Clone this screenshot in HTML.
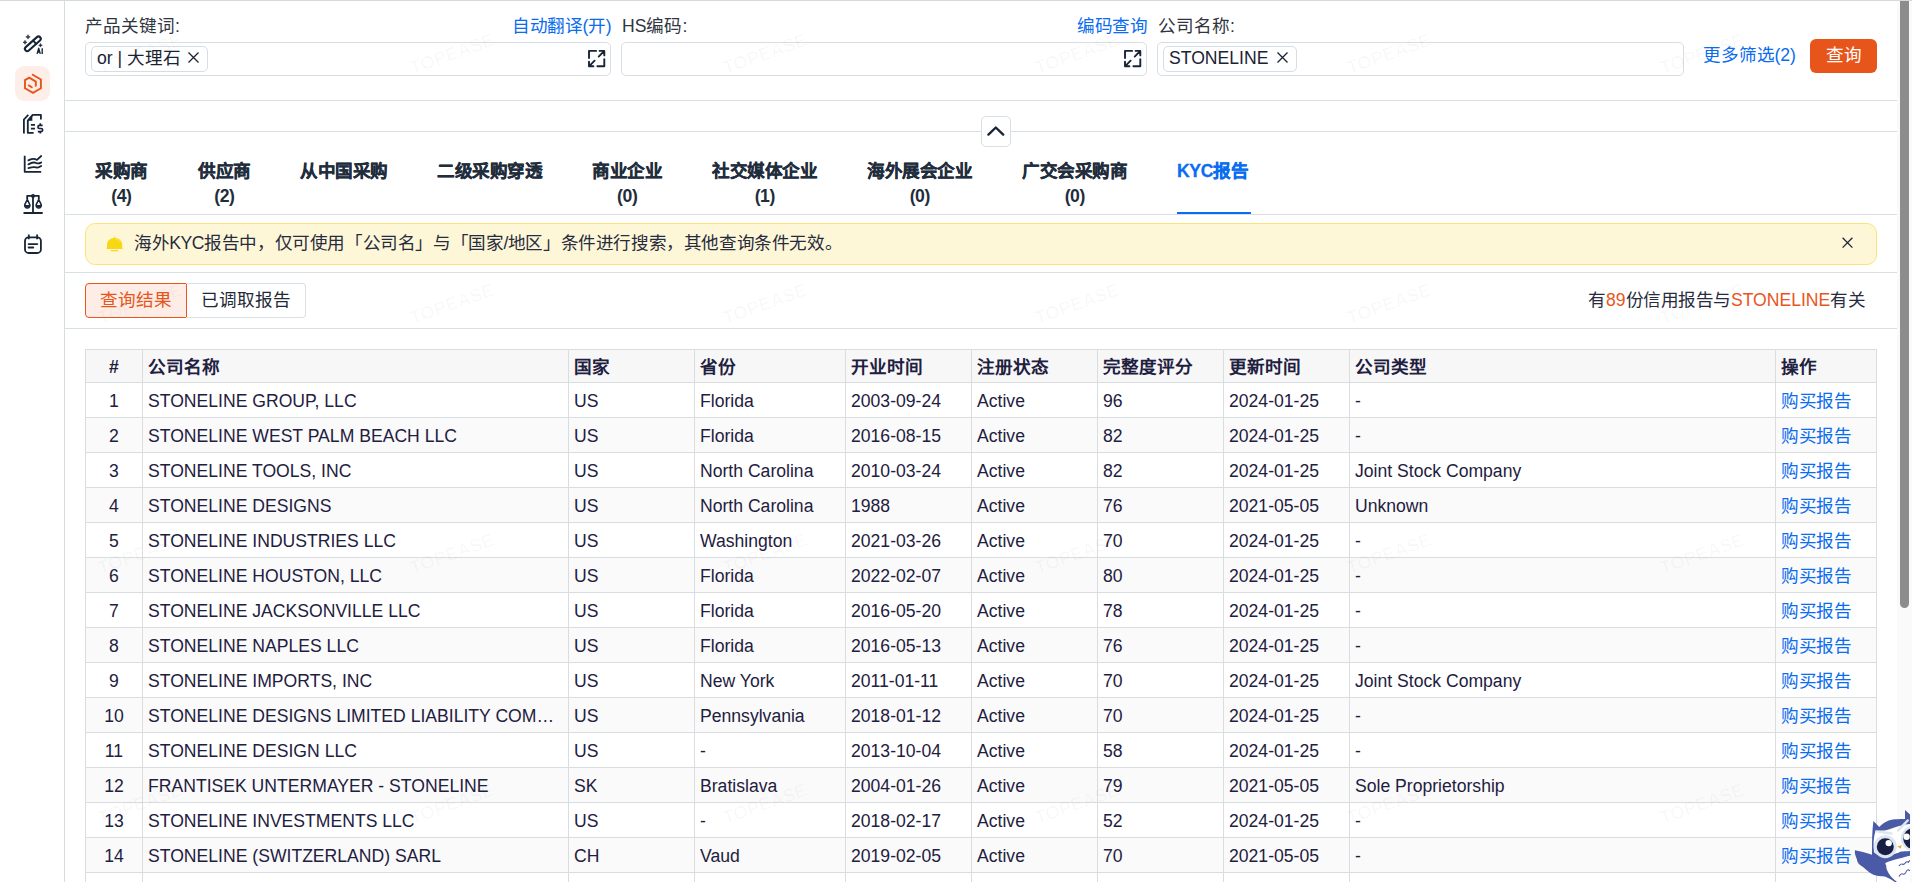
<!DOCTYPE html>
<html lang="zh-CN"><head><meta charset="utf-8">
<style>
*{box-sizing:border-box;margin:0;padding:0}
html,body{width:1912px;height:882px;overflow:hidden;background:#fff}
body{font-family:"Liberation Sans",sans-serif;font-size:17.6px;color:#1f2937;position:relative}
.abs{position:absolute}
#topline{left:0;top:0;width:1912px;height:1px;background:#d3d9dd}
#side{left:0;top:1px;width:65px;height:881px;border-right:1px solid #d6dce0;background:#fff}
.ico{position:absolute;left:0;width:64px;height:40px}
.hl{position:absolute;height:1px;background:#d9dfe4;left:65px;width:1832px}
.lbl{position:absolute;top:14px;line-height:24px;color:#303540;white-space:nowrap}
.lnk{color:#0a6cf0;letter-spacing:-0.35px}
.inp{position:absolute;top:42px;height:34px;border:1px solid #d7dde5;border-radius:5px;background:#fff}
.tag{position:absolute;top:3px;height:26px;border:1px solid #d7dde5;border-radius:5px;padding:0 0 0 5px;line-height:22px;color:#1a2333;white-space:nowrap}
.tag .x{display:inline-block;margin-left:7px;width:11px;height:11px;position:relative;top:-1px}
#btn{left:1810px;top:39px;width:67px;height:34px;background:#e8551b;border-radius:6px;color:#fff;text-align:center;line-height:33px;font-weight:500}
.tab{position:absolute;top:158.5px;text-align:center;font-weight:bold;line-height:25px;color:#1f2d3d;white-space:nowrap;letter-spacing:-0.4px}
.tab i{font-style:normal;-webkit-text-stroke:0.3px}
#alert{left:85px;top:223px;width:1792px;height:42px;border:1px solid #fde47a;background:#fef7d7;border-radius:10px}
#seg{left:85px;top:283px;height:35px}
table{position:absolute;left:85px;top:349px;font-size:17.6px;border-collapse:collapse;table-layout:fixed;color:#1e2040}
td,th{border:1px solid #d9dde0;height:35px;padding:1px 0 0 5px;text-overflow:ellipsis;text-align:left;white-space:nowrap;overflow:hidden;line-height:20px}
th{height:33px;background:#f7f7f7;font-weight:bold}
tr.e td{background:#fafafa}
td.c,th.c{text-align:center;padding:1px 0 0 0}
td.op{color:#0a6cf0;letter-spacing:-0.35px}
#track{left:1897px;top:1px;width:15px;height:881px;background:#fafafa}
#thumb{left:1900px;top:1px;width:9px;height:607px;background:#8c8c8c;border-radius:0 0 4.5px 4.5px}
.wm{position:absolute;width:90px;height:22px;line-height:22px;text-align:center;font-size:18.5px;font-weight:bold;color:rgba(40,40,40,0.027);transform:rotate(-19.5deg);pointer-events:none;white-space:nowrap}
</style></head><body>
<div id="topline" class="abs"></div>
<div id="side" class="abs"></div>
<div class="abs" style="left:15px;top:66px;width:35px;height:35px;border-radius:9px;background:#fdeee8"></div>
<svg class="abs" style="left:0;top:0" width="64" height="270" viewBox="0 0 64 270">
 <g fill="none" stroke="#172536" stroke-width="1.8" stroke-linecap="round" stroke-linejoin="round">
  <rect x="23.05" y="41.53" width="19.6" height="4.6" rx="2.3" transform="rotate(-41.7 32.85 43.83)" stroke-width="2.1"/>
  <path d="M33.2,40.6 L36.1,43.9" stroke-width="2"/>
  <path d="M23.9,133.4 V119.5 L28.3,114.8" stroke-linecap="butt"/>
  <path d="M33.6,132.8 H27.8 V120.7 L32.7,114.8 H40.9 V119.5" stroke-linecap="butt"/>
  <path d="M30.9,124.9 H35 M30.9,128.7 H35" stroke-linecap="butt"/>
  <path d="M42.6,125.4 H39.5 A1.55,1.55 0 0 0 39.5,128.5 H41.1 A1.55,1.55 0 0 1 41.1,131.6 H37.8" stroke-width="1.7" stroke-linecap="butt"/>
  <path d="M40.3,123.3 V125.2 M40.3,131.6 V133.5" stroke-width="1.7" stroke-linecap="butt"/>
  <path d="M24.7,155.7 V171.8 H41.2" stroke-linecap="butt"/>
  <path d="M28.4,160.4 C31,159.2 33.2,157.4 37,159.9 L41.2,156"/>
  <path d="M28.4,164.3 C31,163.2 33.2,161.4 36.2,163 C38.2,164.1 39.6,163.3 41.2,162.5"/>
  <path d="M28.4,168.1 C31,167.3 33.2,166.4 36.2,167.4 C38.2,168.1 39.6,167.1 41.2,166"/>
  <path d="M23.5,213 H42.7 M33,197 V213" stroke-linecap="butt"/>
  <path d="M27.2,199.2 V195.8 H38.8 V199.2" stroke-linecap="butt"/>
  <path d="M27.3,199.5 L24.9,204.4 A2.6,2.6 0 1 0 29.7,204.4 Z" stroke-width="1.6"/>
  <path d="M38.7,199.5 L36.3,204.4 A2.6,2.6 0 1 0 41.1,204.4 Z" stroke-width="1.6"/>
  <rect x="25" y="237.3" width="15.9" height="15.7" rx="3.6"/>
  <path d="M28.8,234.6 V239.2 M37.1,234.6 V239.2" stroke-linecap="butt"/>
  <path d="M28.6,244.1 H37.3 M28.6,247.5 H33.3"/>
 </g>
 <g fill="#172536">
  <path d="M28,34.7 Q28,36.9 30.2,36.9 Q28,36.9 28,39.1 Q28,36.9 25.8,36.9 Q28,36.9 28,34.7Z" stroke="#172536" stroke-width="0.6"/>
  <path d="M25,40.3 Q25,42.3 27,42.3 Q25,42.3 25,44.3 Q25,42.3 23,42.3 Q25,42.3 25,40.3Z" stroke="#172536" stroke-width="0.6"/>
  <path d="M40.5,43.5 Q40.5,45.3 42.3,45.3 Q40.5,45.3 40.5,47.1 Q40.5,45.3 38.7,45.3 Q40.5,45.3 40.5,43.5Z" stroke="#172536" stroke-width="0.6"/>
  <path d="M37.1,53.9 L38.7,48.3 L40.3,53.9 M37.8,52 H39.6 M42.2,48.2 V53.9" stroke="#172536" stroke-width="1.35" fill="none" stroke-linejoin="round"/>
  <path d="M27.8,120.7 L32.3,115.3 V120.7Z"/>
  <circle cx="33" cy="196" r="2"/>
  <path d="M24.6,205 A2.75,2.75 0 0 0 30,205Z"/>
  <path d="M36,205 A2.75,2.75 0 0 0 41.4,205Z"/>
 </g>
 <path d="M35.8,85.7 V81.6 L29.3,77.6 L25,80.1 V88.2 L33,92.8 L40.9,88.2 V79.5 L32.7,74.7 M28.8,85.4 L31.8,87.2" fill="none" stroke="#e8541a" stroke-width="1.9" stroke-linecap="round" stroke-linejoin="miter"/>
</svg>

<!-- filters -->
<div class="lbl" style="left:85px">产品关键词:</div>
<div class="lbl lnk" style="left:512px">自动翻译(开)</div>
<div class="inp" style="left:85px;width:526px">
  <div class="tag" style="left:5px;width:117px">or | 大理石<svg class="x" viewBox="0 0 11 11"><path d="M0.5,0.5 L10.5,10.5 M10.5,0.5 L0.5,10.5" stroke="#1a2333" stroke-width="1.3"/></svg></div>
</div>
<svg class="abs" style="left:584px;top:46px" width="26" height="26" viewBox="584 46 26 26"><g fill="none" stroke="#172536" stroke-width="1.9" stroke-linecap="round" stroke-linejoin="round"><path d="M589,58.1 V50.9 H596.1 M599.6,50.9 H604.3 V55.4 M598.7,56.6 L604.3,50.9 M604.3,59.3 V66.3 H597.4 M589,61.6 V66.3 H593.4 M594.6,60.7 L589,66.3"/></g></svg>
<div class="lbl" style="left:622px">HS编码:</div>
<div class="lbl lnk" style="left:1077px">编码查询</div>
<div class="inp" style="left:621px;width:526px"></div>
<svg class="abs" style="left:1120px;top:46px" width="26" height="26" viewBox="584 46 26 26"><g fill="none" stroke="#172536" stroke-width="1.9" stroke-linecap="round" stroke-linejoin="round"><path d="M589,58.1 V50.9 H596.1 M599.6,50.9 H604.3 V55.4 M598.7,56.6 L604.3,50.9 M604.3,59.3 V66.3 H597.4 M589,61.6 V66.3 H593.4 M594.6,60.7 L589,66.3"/></g></svg>
<div class="lbl" style="left:1158px">公司名称:</div>
<div class="inp" style="left:1157px;width:527px">
  <div class="tag" style="left:5px;width:134px">STONELINE<svg class="x" style="margin-left:9px" viewBox="0 0 11 11"><path d="M0.5,0.5 L10.5,10.5 M10.5,0.5 L0.5,10.5" stroke="#1a2333" stroke-width="1.3"/></svg></div>
</div>
<div class="lbl lnk" style="left:1703px;top:43px;letter-spacing:-0.1px">更多筛选(2)</div>
<div id="btn" class="abs">查询</div>

<div class="hl" style="top:100px"></div>
<div class="hl" style="top:131px"></div>

<div class="abs" style="left:981px;top:116px;width:30px;height:31px;border:1px solid #d9dfe7;border-radius:5px;background:#fff"></div>
<svg class="abs" style="left:981px;top:116px" width="30" height="31" viewBox="981 116 30 31"><path d="M988.4,134.6 L995.8,127.5 L1003.2,134.6" fill="none" stroke="#172536" stroke-width="2.4" stroke-linecap="round" stroke-linejoin="round"/></svg>
<!-- tabs -->
<div class="tab" style="left:95px"><i>采购商</i><br>(4)</div>
<div class="tab" style="left:198px"><i>供应商</i><br>(2)</div>
<div class="tab" style="left:300px"><i>从中国采购</i></div>
<div class="tab" style="left:437px"><i>二级采购穿透</i></div>
<div class="tab" style="left:592px"><i>商业企业</i><br>(0)</div>
<div class="tab" style="left:712px"><i>社交媒体企业</i><br>(1)</div>
<div class="tab" style="left:867px"><i>海外展会企业</i><br>(0)</div>
<div class="tab" style="left:1022px"><i>广交会采购商</i><br>(0)</div>
<div class="tab" style="left:1177px;color:#0a6cf0"><i>KYC报告</i></div>
<div class="abs" style="left:1177px;top:212px;width:74px;height:2px;background:#0a6cf0"></div>
<div class="hl" style="top:214px"></div>

<div id="alert" class="abs">
  <svg class="abs" style="left:16px;top:8px" width="26" height="22" viewBox="102 232 26 22"><path d="M114.6,236 L115.3,238 C119.8,238.4 122.2,241.5 122.2,245 V248.2 L123.3,249.1 H106.1 L107,248.2 V245 C107,241.5 109.4,238.4 113.9,238 Z" fill="#f6d813"/><path d="M111.3,250.6 H117.6" stroke="#f6d813" stroke-width="1.3" stroke-linecap="round"/><path d="M115.8,239.4 C117.8,239.6 119.4,240.4 120,241.9" stroke="#fbe55e" stroke-width="0.7" fill="none"/></svg>
  <div id="atxt" class="abs" style="left:48px;top:7px;line-height:24px;color:#272b3e;white-space:nowrap;letter-spacing:-0.4px">海外KYC报告中，仅可使用「公司名」与「国家/地区」条件进行搜索，其他查询条件无效。</div>
  <svg class="abs" style="left:1754px;top:12px" width="14" height="14" viewBox="0 0 14 14"><path d="M2.6 1.8l9.8 9.8M12.4 1.8l-9.8 9.8" stroke="#22223c" stroke-width="1.3"/></svg>
</div>
<div class="hl" style="top:272px"></div>
<div class="abs" style="left:85px;top:283px;width:102px;height:35px;border:1px solid #e8561c;background:#fdede6;border-radius:4px 0 0 4px;color:#e8561c;text-align:center;line-height:33px">查询结果</div>
<div class="abs" style="left:186px;top:283px;width:120px;height:35px;border:1px solid #dbe0e6;border-left:none;border-radius:0 4px 4px 0;color:#1f2937;text-align:center;line-height:33px">已调取报告</div>
<div class="abs" style="left:1588px;top:288px;line-height:24px;white-space:nowrap;color:#272b3e">有<span style="color:#e8561c">89</span><span style="letter-spacing:-0.45px">份信用报告与</span><span style="color:#e8561c">STONELINE</span>有关</div>
<div class="hl" style="top:328px"></div>

<table>
<colgroup><col style="width:57px"><col style="width:426px"><col style="width:126px"><col style="width:151px"><col style="width:126px"><col style="width:126px"><col style="width:126px"><col style="width:126px"><col style="width:426px"><col style="width:101px"></colgroup>
<tr><th class="c">#</th><th>公司名称</th><th>国家</th><th>省份</th><th>开业时间</th><th>注册状态</th><th>完整度评分</th><th>更新时间</th><th>公司类型</th><th>操作</th></tr>
<tr><td class="c">1</td><td>STONELINE GROUP, LLC</td><td>US</td><td>Florida</td><td>2003-09-24</td><td>Active</td><td>96</td><td>2024-01-25</td><td>-</td><td class="op">购买报告</td></tr>
<tr class="e"><td class="c">2</td><td>STONELINE WEST PALM BEACH LLC</td><td>US</td><td>Florida</td><td>2016-08-15</td><td>Active</td><td>82</td><td>2024-01-25</td><td>-</td><td class="op">购买报告</td></tr>
<tr><td class="c">3</td><td>STONELINE TOOLS, INC</td><td>US</td><td>North Carolina</td><td>2010-03-24</td><td>Active</td><td>82</td><td>2024-01-25</td><td>Joint Stock Company</td><td class="op">购买报告</td></tr>
<tr class="e"><td class="c">4</td><td>STONELINE DESIGNS</td><td>US</td><td>North Carolina</td><td>1988</td><td>Active</td><td>76</td><td>2021-05-05</td><td>Unknown</td><td class="op">购买报告</td></tr>
<tr><td class="c">5</td><td>STONELINE INDUSTRIES LLC</td><td>US</td><td>Washington</td><td>2021-03-26</td><td>Active</td><td>70</td><td>2024-01-25</td><td>-</td><td class="op">购买报告</td></tr>
<tr class="e"><td class="c">6</td><td>STONELINE HOUSTON, LLC</td><td>US</td><td>Florida</td><td>2022-02-07</td><td>Active</td><td>80</td><td>2024-01-25</td><td>-</td><td class="op">购买报告</td></tr>
<tr><td class="c">7</td><td>STONELINE JACKSONVILLE LLC</td><td>US</td><td>Florida</td><td>2016-05-20</td><td>Active</td><td>78</td><td>2024-01-25</td><td>-</td><td class="op">购买报告</td></tr>
<tr class="e"><td class="c">8</td><td>STONELINE NAPLES LLC</td><td>US</td><td>Florida</td><td>2016-05-13</td><td>Active</td><td>76</td><td>2024-01-25</td><td>-</td><td class="op">购买报告</td></tr>
<tr><td class="c">9</td><td>STONELINE IMPORTS, INC</td><td>US</td><td>New York</td><td>2011-01-11</td><td>Active</td><td>70</td><td>2024-01-25</td><td>Joint Stock Company</td><td class="op">购买报告</td></tr>
<tr class="e"><td class="c">10</td><td>STONELINE DESIGNS LIMITED LIABILITY COM…</td><td>US</td><td>Pennsylvania</td><td>2018-01-12</td><td>Active</td><td>70</td><td>2024-01-25</td><td>-</td><td class="op">购买报告</td></tr>
<tr><td class="c">11</td><td>STONELINE DESIGN LLC</td><td>US</td><td>-</td><td>2013-10-04</td><td>Active</td><td>58</td><td>2024-01-25</td><td>-</td><td class="op">购买报告</td></tr>
<tr class="e"><td class="c">12</td><td>FRANTISEK UNTERMAYER - STONELINE</td><td>SK</td><td>Bratislava</td><td>2004-01-26</td><td>Active</td><td>79</td><td>2021-05-05</td><td>Sole Proprietorship</td><td class="op">购买报告</td></tr>
<tr><td class="c">13</td><td>STONELINE INVESTMENTS LLC</td><td>US</td><td>-</td><td>2018-02-17</td><td>Active</td><td>52</td><td>2024-01-25</td><td>-</td><td class="op">购买报告</td></tr>
<tr class="e"><td class="c">14</td><td>STONELINE (SWITZERLAND) SARL</td><td>CH</td><td>Vaud</td><td>2019-02-05</td><td>Active</td><td>70</td><td>2021-05-05</td><td>-</td><td class="op">购买报告</td></tr>
<tr><td class="c">15</td><td></td><td></td><td></td><td></td><td></td><td></td><td></td><td></td><td></td></tr>
</table>

<div class="wm" style="left:95.0px;top:43.0px">TOPEASE</div>
<div class="wm" style="left:407.3px;top:43.0px">TOPEASE</div>
<div class="wm" style="left:719.6px;top:43.0px">TOPEASE</div>
<div class="wm" style="left:1031.9px;top:43.0px">TOPEASE</div>
<div class="wm" style="left:1344.2px;top:43.0px">TOPEASE</div>
<div class="wm" style="left:1656.5px;top:43.0px">TOPEASE</div>
<div class="wm" style="left:95.0px;top:293.0px">TOPEASE</div>
<div class="wm" style="left:407.3px;top:293.0px">TOPEASE</div>
<div class="wm" style="left:719.6px;top:293.0px">TOPEASE</div>
<div class="wm" style="left:1031.9px;top:293.0px">TOPEASE</div>
<div class="wm" style="left:1344.2px;top:293.0px">TOPEASE</div>
<div class="wm" style="left:1656.5px;top:293.0px">TOPEASE</div>
<div class="wm" style="left:95.0px;top:543.0px">TOPEASE</div>
<div class="wm" style="left:407.3px;top:543.0px">TOPEASE</div>
<div class="wm" style="left:719.6px;top:543.0px">TOPEASE</div>
<div class="wm" style="left:1031.9px;top:543.0px">TOPEASE</div>
<div class="wm" style="left:1344.2px;top:543.0px">TOPEASE</div>
<div class="wm" style="left:1656.5px;top:543.0px">TOPEASE</div>
<div class="wm" style="left:95.0px;top:793.0px">TOPEASE</div>
<div class="wm" style="left:407.3px;top:793.0px">TOPEASE</div>
<div class="wm" style="left:719.6px;top:793.0px">TOPEASE</div>
<div class="wm" style="left:1031.9px;top:793.0px">TOPEASE</div>
<div class="wm" style="left:1344.2px;top:793.0px">TOPEASE</div>
<div class="wm" style="left:1656.5px;top:793.0px">TOPEASE</div>
<div id="track" class="abs"></div>
<div id="thumb" class="abs"></div>
<svg class="abs" style="left:1850px;top:800px" width="60" height="82" viewBox="1850 800 60 82">
 <path d="M1873.4,821 L1879.3,827 C1884,822 1889,819.5 1895,819.2 C1899,819 1902,818.9 1905,818.9 V810 L1910,814.6 V866 H1872 V850 C1872,842 1872,832 1873.4,821Z" fill="#4a5aa6"/>
 <path d="M1875.5,830.8 C1880,830.6 1884,830.6 1886,830.2 C1892,828.5 1896,826.5 1899.3,826 C1903,824.8 1907,824.3 1910,824.1 V851 C1906,851.2 1903,851.4 1901,851.6 C1898,853 1893,855 1887,856 C1881,856 1876,855 1874,852 C1873,845 1873.5,837 1875.5,830.8Z" fill="#fff"/>
 <path d="M1876.3,831.4 L1891.6,833.5 M1898,830.6 L1907.8,820.4" stroke="#dce5f2" stroke-width="2.3" stroke-linecap="round" fill="none"/>
 <circle cx="1885.3" cy="846.7" r="11.45" fill="#dce5f2"/>
 <circle cx="1885.3" cy="846.7" r="8.5" fill="#1a1e44"/>
 <circle cx="1888.7" cy="843.1" r="3.2" fill="#fff"/>
 <circle cx="1913.5" cy="838.5" r="12.6" fill="#dce5f2"/>
 <circle cx="1913.5" cy="838.5" r="10.3" fill="#1a1e44"/>
 <circle cx="1906.6" cy="836.8" r="3.2" fill="#fff"/>
 <path d="M1897.2,846.2 L1901.8,845.2 L1900.6,848.8Z" fill="#e8aa3e"/>
 <path d="M1854.9,850.2 C1861,851.5 1867,853 1872,854.8 L1874,856 C1878,859.5 1882,861 1886,861 C1894,858 1902,856 1910,855.2 V882 H1894.9 C1891,879 1886,876.5 1883,876.2 C1879,876.5 1876,875.8 1873.4,874.8 C1869,872.5 1866,869.5 1863,867 C1859,865 1857,862 1856.8,859 C1855.5,856 1854.5,853 1854.9,850.2Z" fill="#4a5aa6"/>
 <path d="M1885.3,862.9 C1889,861.6 1893,860.2 1898,858.8 C1903,857.5 1907,856.3 1910,855.7 V882 H1897 C1893,879 1890.5,876 1889.5,874.5 C1887.5,871.5 1886,868.5 1886.3,866 C1885.8,865 1885.3,864 1885.3,862.9Z" fill="#fff"/>
 <path d="M1899.2,865.6 C1900.5,864 1901.5,863.6 1902.6,864.2 C1903.6,864.8 1904.4,864.2 1905.6,862.6 C1906.6,861.4 1907.5,861.8 1908.2,862.4 L1909.6,860.6 M1899.2,876.1 C1900.5,874 1901.5,873.4 1902.8,874 C1904,874.5 1905,874 1905.8,872.4 C1906.6,870.5 1907.5,869.6 1908.4,869.8 L1909.6,870.6" stroke="#4a5aa6" stroke-width="1.05" fill="none" stroke-linecap="round" stroke-linejoin="round"/>
</svg>
</body></html>
